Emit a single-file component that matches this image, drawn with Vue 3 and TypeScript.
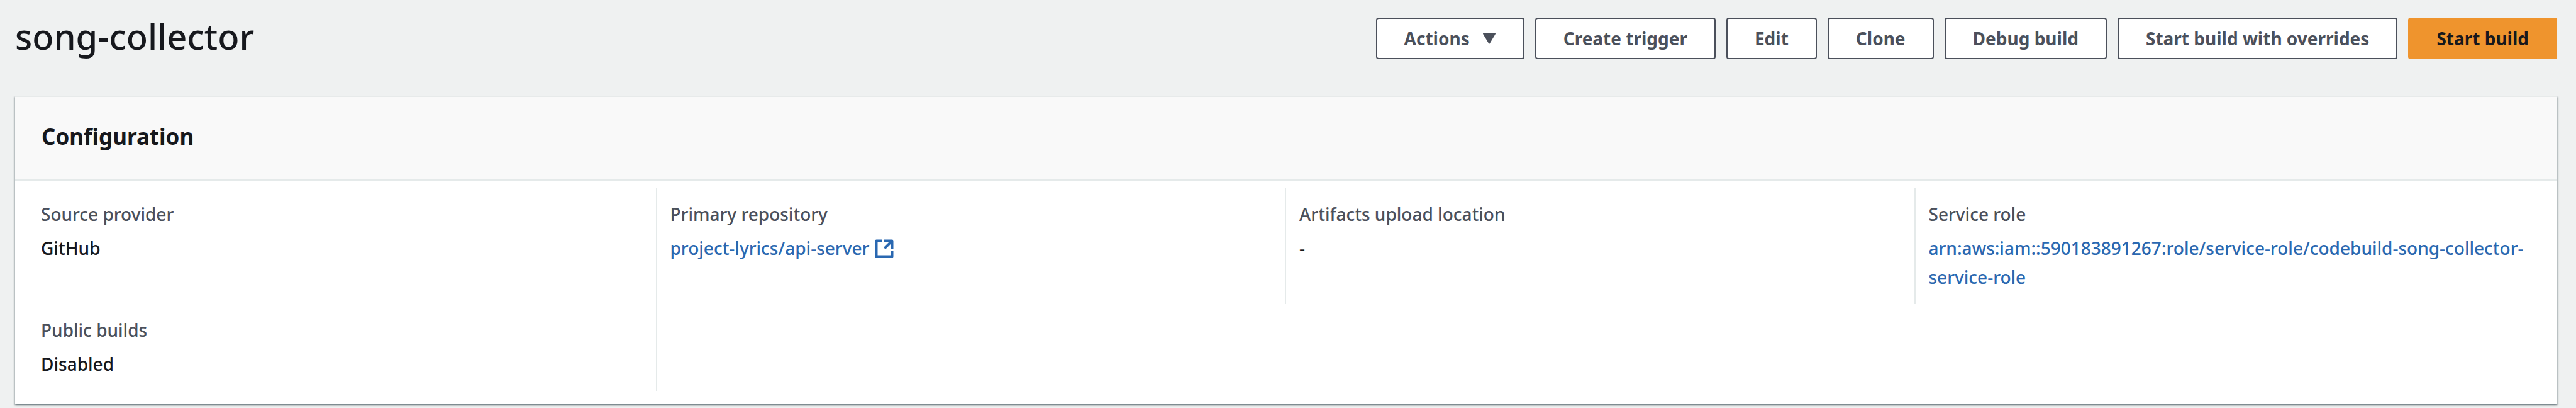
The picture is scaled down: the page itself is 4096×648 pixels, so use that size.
<script setup lang="ts">
interface Action {
  label: string
  menu?: boolean
  primary?: boolean
}

interface Field {
  label: string
  value: string
  href?: string
  external?: boolean
}

const projectName = 'song-collector'

const actions: Action[] = [
  { label: 'Actions', menu: true },
  { label: 'Create trigger' },
  { label: 'Edit' },
  { label: 'Clone' },
  { label: 'Debug build' },
  { label: 'Start build with overrides' },
  { label: 'Start build', primary: true },
]

const fields: Field[] = [
  { label: 'Source provider', value: 'GitHub' },
  { label: 'Primary repository', value: 'project-lyrics/api-server', href: '#repository', external: true },
  { label: 'Artifacts upload location', value: '-' },
  {
    label: 'Service role',
    value: 'arn:aws:iam::590183891267:role/service-role/codebuild-song-collector-service-role',
    href: '#service-role',
  },
  { label: 'Public builds', value: 'Disabled' },
]
</script>

<template>
  <main class="page">
    <header class="topbar">
      <h1 class="title">{{ projectName }}</h1>
      <div class="actions">
        <button
          v-for="action in actions"
          :key="action.label"
          type="button"
          class="button"
          :class="{ primary: action.primary }"
          :aria-haspopup="action.menu ? 'menu' : undefined"
        >
          {{ action.label }}
          <svg v-if="action.menu" class="caret" viewBox="0 0 22 18" aria-hidden="true">
            <path d="M2 1.5H20L11 16.5Z" fill="currentColor" stroke="currentColor" stroke-width="2" stroke-linejoin="round" />
          </svg>
        </button>
      </div>
    </header>

    <section class="card" aria-labelledby="configuration">
      <div class="card-header">
        <h2 id="configuration" class="card-title">Configuration</h2>
      </div>
      <dl class="fields">
        <div v-for="field in fields" :key="field.label" class="field">
          <dt class="label">{{ field.label }}</dt>
          <dd class="value">
            <a v-if="field.href" class="link" :href="field.href">{{ field.value
              }}<svg v-if="field.external" class="external" viewBox="0 0 30 30" aria-hidden="true">
                <path
                  d="M11 2.5H2.5V27.5H27.5V19M15 2.5H27.5V15M27 3L15.5 14.5"
                  fill="none"
                  stroke="currentColor"
                  stroke-width="4"
                  stroke-linejoin="round"
                />
              </svg></a>
            <template v-else>{{ field.value }}</template>
          </dd>
        </div>
      </dl>
    </section>
  </main>
</template>

<style>
body {
  margin: 0;
  background: #eff1f1;
}
</style>

<style scoped>
.page {
  padding: 22px 30px 5px 24px;
  font-family: "Noto Sans", "Open Sans", sans-serif;
  font-size: 28px;
  font-weight: 500;
  line-height: 46px;
  color: #16181d;
}

.topbar {
  display: flex;
  align-items: flex-start;
  justify-content: space-between;
  padding-bottom: 58px;
}

.title {
  margin: 0;
  font-size: 56px;
  line-height: 70px;
  font-weight: 500;
}

.actions {
  display: flex;
  gap: 17px;
  padding-top: 6px;
}

.button {
  display: flex;
  align-items: center;
  gap: 20px;
  padding: 8px 43px;
  border: 2px solid #4b505b;
  border-radius: 4px;
  background: #fff;
  color: #4b505b;
  font-family: inherit;
  font-size: 28px;
  font-weight: 700;
  line-height: 46px;
  white-space: nowrap;
}

.button.primary {
  border-color: #ef942d;
  background: #ef942d;
  color: #16181d;
}

.caret {
  width: 22px;
  height: 18px;
}

.card {
  border-top: 2px solid #e7eaea;
  background: #fff;
  box-shadow:
    0 2px 2px rgba(0, 28, 36, 0.3),
    2px 2px 2px rgba(0, 28, 36, 0.15),
    -2px 2px 2px rgba(0, 28, 36, 0.15);
}

.card-header {
  padding: 39px 42px 44px;
  border-bottom: 2px solid #e5eaea;
  background: #f9f9f9;
}

.card-title {
  margin: 0;
  font-size: 35px;
  line-height: 48px;
  font-weight: 700;
}

.fields {
  display: grid;
  grid-template-columns: repeat(4, minmax(0, 1fr));
  margin: 0;
  padding: 12px 20px 21px;
}

.field {
  padding: 18px 20px 20px 21px;
  border-right: 2px solid #e5eaea;
}

.field:nth-child(4n) {
  border-right-color: transparent;
}

.label {
  color: #4b505b;
}

.value {
  margin: 8px 0 0;
}

.link {
  color: #2a68b1;
  text-decoration: none;
}

.external {
  width: 30px;
  height: 30px;
  margin-left: 9px;
  vertical-align: -5px;
}
</style>
